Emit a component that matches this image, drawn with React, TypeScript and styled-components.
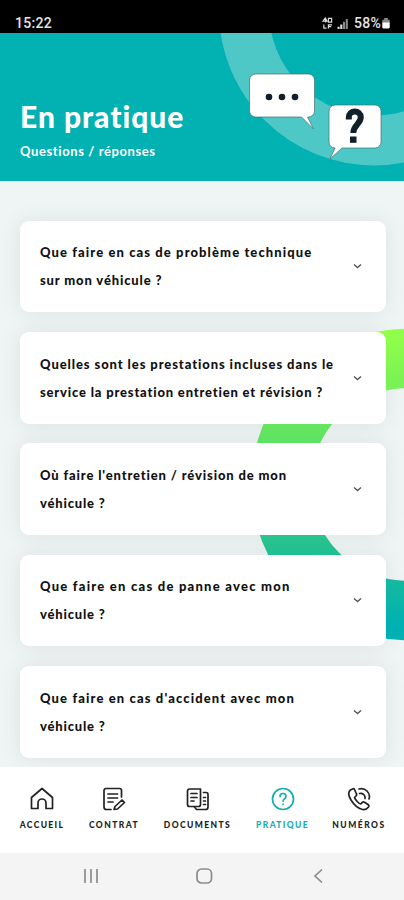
import React from 'react';
import styled, { createGlobalStyle } from 'styled-components';

const Global = createGlobalStyle`
  *{box-sizing:border-box}
  body{margin:0;background:#fff;font-family:Lato,"Liberation Sans",sans-serif}
`;
const Screen = styled.div`width:404px;height:900px;display:flex;flex-direction:column;overflow:hidden;`;

const StatusBar = styled.div`
  height:33px;flex:none;background:#000;color:#e4e4e4;display:flex;justify-content:space-between;align-items:flex-end;
  padding:0 13px 2px 15px;font:500 14px/16px Roboto,sans-serif;
`;
const Clock = styled.span`letter-spacing:.3px;`;
const Percent = styled.span`letter-spacing:.3px;`;
const StatusIcons = styled.div`display:flex;align-items:center;`;
const NetIcon = styled.svg`width:11px;height:13px;margin-right:4px;`;
const SignalIcon = styled.svg`width:12px;height:11px;margin-right:5px;`;
const BatteryIcon = styled.svg`width:10px;height:12px;`;

const Header = styled.header`
  height:148px;flex:none;background:#02b1b1;display:grid;color:#fff;
  & > *{grid-area:1/1;}
`;
const HeaderArt = styled.svg`width:404px;height:148px;display:block;`;
const Heading = styled.div`padding:66px 0 0 20px;`;
const Title = styled.h1`margin:0;font:900 30px/34px Lato,sans-serif;letter-spacing:.95px;`;
const Subtitle = styled.p`margin:9px 0 0;font:700 13px/18px Lato,sans-serif;letter-spacing:.6px;`;

const Content = styled.main`
  flex:none;height:586px;background:#eff5f5;position:relative;isolation:isolate;overflow:hidden;
  padding:39.500px 18px 0 20px;display:flex;flex-direction:column;gap:19.700px;
`;
const Ring = styled.svg`position:absolute;inset:0;z-index:-1;width:404px;height:586px;`;
const Card = styled.section`
  flex:none;height:91.700px;border-radius:9px;background:#fff;position:relative;
  display:flex;align-items:center;justify-content:space-between;padding:0 23px 0 20px;
  &::before{content:'';position:absolute;inset:0;border-radius:9px;z-index:-2;box-shadow:0 0 20px rgba(90,75,75,.12);}
`;
const Question = styled.p`margin:0;color:#111;font:900 13px/28px Lato,sans-serif;`;
const Line = styled.span<{ $spacing: number }>`display:block;white-space:nowrap;letter-spacing:${p => p.$spacing}px;`;
const Chevron = styled.svg`width:11px;height:8px;flex:none;`;

const Tabs = styled.nav`
  height:86px;flex:none;background:#fff;display:grid;grid-template-columns:84px 60px 107px 63px 90px;
`;
const Tab = styled.div<{ $active?: boolean }>`
  display:flex;flex-direction:column;align-items:center;padding-top:20px;
  color:${p => (p.$active ? '#12aeb0' : '#202224')};
`;
const TabIcon = styled.svg`width:24px;height:24px;fill:none;stroke:currentColor;stroke-width:1.700;stroke-linecap:round;stroke-linejoin:round;`;
const TabLabel = styled.span<{ $spacing: number }>`
  margin-top:8px;white-space:nowrap;font:900 8.500px/12px Lato,sans-serif;letter-spacing:${p => p.$spacing}px;
`;

const SystemBar = styled.footer`
  height:47px;flex:none;background:#f4f4f4;display:grid;grid-template-columns:145px 82px 146px;align-items:center;
  justify-items:center;padding-left:18px;
`;
const SystemIcon = styled.svg`width:20px;height:20px;margin-top:-2px;fill:none;stroke:#8b8b8b;stroke-width:1.700;`;

const questions: { text: string; spacing: number }[][] = [
  [{ text: 'Que faire en cas de problème technique', spacing: 1.1 }, { text: 'sur mon véhicule ?', spacing: 0.86 }],
  [{ text: 'Quelles sont les prestations incluses dans le', spacing: 0.91 }, { text: 'service la prestation entretien et révision ?', spacing: 0.82 }],
  [{ text: "Où faire l'entretien / révision de mon", spacing: 0.86 }, { text: 'véhicule ?', spacing: 0.8 }],
  [{ text: 'Que faire en cas de panne avec mon', spacing: 1.24 }, { text: 'véhicule ?', spacing: 0.8 }],
  [{ text: "Que faire en cas d'accident avec mon", spacing: 1.13 }, { text: 'véhicule ?', spacing: 0.8 }],
];

const tabs = [
  { label: 'ACCUEIL', spacing: 1.35, icon: <path d="M1.500 10.500 12 1.500l10.500 9V21.500h-6.500V16a4 4 0 0 0-8 0v5.500H1.500z" /> },
  { label: 'CONTRAT', spacing: 1.45, icon: <><path d="M19.500 10V3.500a2 2 0 0 0-2-2H4a2 2 0 0 0-2 2V20a2.500 2.500 0 0 0 2.500 2.500H9M6 7h9.500M6 11h9.500M6 15h5" /><path d="m13 19.500 7-6.500 2.500 2.500-7 6.500-3.500.5z" /></> },
  { label: 'DOCUMENTS', spacing: 1.4, icon: <><path d="M14.500 2H3.500a2 2 0 0 0-2 2v13.500a2 2 0 0 0 2 2h9a2 2 0 0 0 2-2zM5 6.500h6M5 10.500h6M5 14h3" /><path d="M17.500 5.500H20a2 2 0 0 1 2 2V20a2.500 2.500 0 0 1-2.500 2.500h-9L8.500 20M17.500 10.500h2M17.500 14h2M17.500 17.500h2" /></> },
  { label: 'PRATIQUE', spacing: 1.35, active: true, icon: <><circle cx="12" cy="12" r="10.500" /><path d="M9 9.500C9 5.500 15 5.500 15 9.500c0 2.500-3 2.300-3 4.700M12 17v.4" /></> },
  { label: 'NUMÉROS', spacing: 1.5, icon: <><path d="M6 1.800 3.500 3C1 5 1.500 9 4 13s7 8.500 11.500 9.500c2.500.5 4.500-.5 6-2.500.7-1 .3-1.800-.5-2.500l-3.500-2.300c-1-.6-1.700-.3-2.500.5l-1.200 1.300C12 17 8 12.500 7.500 10.500L9 9c.8-.8.8-1.500.3-2.500L7.500 2.500C7.200 1.800 6.800 1.500 6 1.800zM12 2c6-2 12 4 10 10M12.500 6.500c3.500-.7 6 2 5.500 5" /></> },
];

export default function App() {
  return (
    <Screen>
      <Global />
      <StatusBar>
        <Clock>15:22</Clock>
        <StatusIcons>
          <NetIcon viewBox="0 0 12 14" fill="none" stroke="#ddd" strokeWidth="1.300">
            <path d="M4 1v5M1 4.500h4.500L3.500 1zM7 1.500h3.500v4H7zM2 8v4h3M7 12.500V8.500h4M7 10.500h3" />
          </NetIcon>
          <SignalIcon viewBox="0 0 12 12">
            <path d="M0 9.500h2.300V12H0zM3 7h2.300v5H3z" fill="#ddd" /><path d="M6 4h2.300v8H6zM9 1h2.300v11H9z" fill="#888" />
          </SignalIcon>
          <Percent>58%</Percent>
          <BatteryIcon viewBox="0 0 10 13"><path d="M3 1h4v2h2v4H1V3h2z" fill="#888" /><path d="M1 6h8v5.500l-1 1H2l-1-1z" fill="#fff" /></BatteryIcon>
        </StatusIcons>
      </StatusBar>
      <Header>
        <HeaderArt viewBox="0 33 404 148">
          <circle cx="374" cy="10.500" r="130" fill="none" stroke="#4dc8c7" strokeWidth="50" />
          <path d="M255.500 74h53a6 6 0 0 1 6 6v31a6 6 0 0 1-6 6h-1l6 12-12-12h-46a6 6 0 0 1-6-6V80a6 6 0 0 1 6-6z" fill="#fff" stroke="#456e73" strokeWidth=".7" />
          <g fill="#10202a"><circle cx="269" cy="97" r="3.300" /><circle cx="282" cy="97" r="3.300" /><circle cx="295" cy="97" r="3.300" /></g>
          <path d="M335 105h40a6 6 0 0 1 6 6v31a6 6 0 0 1-6 6h-33l-12 11 5-11a6 6 0 0 1-6-6v-31a6 6 0 0 1 6-6z" fill="#fff" stroke="#456e73" strokeWidth=".7" />
          <path d="M348.800 119.500v-1.800c0-8.200 12-8.200 12-.4 0 6.500-7.500 7.500-7.500 15.700" fill="none" stroke="#10202a" strokeWidth="6" />
          <path d="M350 136.500h6.500v6.300H350z" fill="#10202a" />
        </HeaderArt>
        <Heading><Title>En pratique</Title><Subtitle>Questions / réponses</Subtitle></Heading>
      </Header>
      <Content>
        <Ring viewBox="0 181 404 586">
          <defs><linearGradient id="ring" gradientUnits="userSpaceOnUse" x1="0" y1="335" x2="0" y2="625">
            <stop stopColor="#91ff49" /><stop offset=".36" stopColor="#5fe264" /><stop offset=".72" stopColor="#25c18f" /><stop offset="1" stopColor="#00b1b3" />
          </linearGradient></defs>
          <circle cx="407" cy="484.500" r="126" fill="none" stroke="url(#ring)" strokeWidth="59.500" />
        </Ring>
        {questions.map((lines, i) => (
          <Card key={i}>
            <Question>{lines.map(l => <Line key={l.text} $spacing={l.spacing}>{l.text}</Line>)}</Question>
            <Chevron viewBox="0 0 11 8"><path d="m2 2.500 3.500 3L9 2.500" fill="none" stroke="#555" strokeWidth="1.400" /></Chevron>
          </Card>
        ))}
      </Content>
      <Tabs>
        {tabs.map(t => (
          <Tab key={t.label} $active={t.active}>
            <TabIcon viewBox="0 0 24 24">{t.icon}</TabIcon>
            <TabLabel $spacing={t.spacing}>{t.label}</TabLabel>
          </Tab>
        ))}
      </Tabs>
      <SystemBar>
        <SystemIcon viewBox="0 0 20 20"><path d="M4 3v14M10 3v14M16 3v14" /></SystemIcon>
        <SystemIcon viewBox="0 0 20 20"><rect x="3" y="3" width="14.500" height="14" rx="4.500" /></SystemIcon>
        <SystemIcon viewBox="0 0 20 20"><path d="m14 3.500-7 6.500 7 6.500" /></SystemIcon>
      </SystemBar>
    </Screen>
  );
}
